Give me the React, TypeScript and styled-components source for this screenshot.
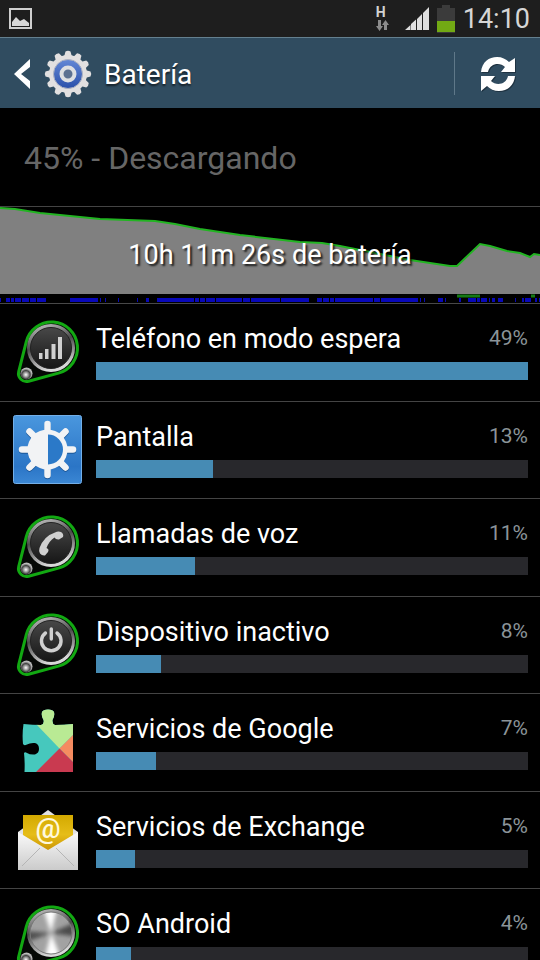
import React, { useId } from "react";
import styled, { createGlobalStyle } from "styled-components";

const GlobalStyle = createGlobalStyle`
  *, *::before, *::after { box-sizing: border-box; }
  body { margin: 0; background: #000; color: #fff; font-family: Roboto, "Noto Sans", sans-serif; overflow: hidden; }
  svg { display: block; flex: none; }
`;

const Screen = styled.main`
  display: flex;
  flex-direction: column;
  height: 100vh;
  overflow: hidden;
  & > * { flex: none; }
`;

const StatusBar = styled.div`
  display: flex;
  align-items: center;
  justify-content: space-between;
  height: 37px;
  padding: 0 10px 0 8px;
  background: #1e1e1e;
`;

const StatusGroup = styled.div`
  display: flex;
  align-items: center;
  gap: 8px;
`;

const Network = styled.div`
  display: flex;
  flex-direction: column;
  gap: 2px;
  width: 21px;
  color: #d2d2d2;
  font-size: 14px;
  line-height: 12px;
  font-weight: 700;
`;

const Clock = styled.time`
  color: #d6d6d6;
  font-size: 27px;
  line-height: 36px;
`;

const Header = styled.header`
  display: flex;
  align-items: center;
  height: 71px;
  padding: 1px 0 0 12px;
  border-top: 1px solid #64808f;
  background: #304c60;
`;

const BackButton = styled.button`
  display: flex;
  align-items: center;
  gap: 12px;
  padding: 0;
  border: 0;
  background: none;
`;

const Title = styled.h1`
  flex: 1;
  margin: 2px 0 0 12px;
  font-size: 28px;
  line-height: 36px;
  font-weight: 400;
  text-shadow: 0 2px 2px rgba(0, 0, 0, 0.6);
`;

const RefreshButton = styled.button`
  display: flex;
  align-items: center;
  justify-content: center;
  width: 86px;
  height: 43px;
  padding: 0;
  border: 0;
  border-left: 1px solid #5f7889;
  background: none;
`;

const Summary = styled.p`
  margin: 0;
  padding: 32px 24px 30px;
  border-bottom: 1px solid #444;
  color: #666;
  font-size: 32px;
  line-height: 36px;
`;

const HistoryButton = styled.button`
  display: grid;
  width: 100%;
  padding: 0;
  border: 0;
  border-bottom: 1px solid #484848;
  background: none;
  color: #fff;
  font: inherit;
  & > * { grid-area: 1 / 1; }
`;

const HistoryLabel = styled.span`
  place-self: center;
  font-size: 27px;
  line-height: 36px;
  text-shadow: 2px 2px 2px rgba(0, 0, 0, 0.8);
`;

const List = styled.ul`
  margin: 0;
  padding: 0;
  list-style: none;
`;

const Row = styled.li`
  display: flex;
  align-items: flex-start;
  gap: 12px;
  height: 98px;
  padding: 12px 12px 0;
  border-bottom: 1px solid #444;
  &:nth-child(even) { height: 97px; }
`;

const Details = styled.div`
  flex: 1;
  min-width: 0;
`;

const Line = styled.div`
  display: flex;
  justify-content: space-between;
  align-items: center;
  height: 46px;
`;

const Name = styled.span`
  font-size: 27px;
  line-height: 36px;
`;

const Percent = styled.span`
  padding-bottom: 2px;
  color: #8b9499;
  font-size: 21px;
  line-height: 36px;
`;

const Track = styled.div`
  height: 18px;
  background: #28282c;
`;

const Fill = styled.div`
  height: 100%;
  background: #468bb4;
`;

const PictureIcon = () => (
  <svg width="25" height="22" viewBox="0 0 25 22" aria-hidden="true">
    <path d="M2 1H23V20H2Z" fill="none" stroke="#cfcfcf" strokeWidth="2" />
    <path d="M4 18V14L8 9L12 13L16 11L21 15V18Z" fill="#d8d8d8" />
  </svg>
);

const DataArrows = () => (
  <svg width="13" height="11" viewBox="0 0 13 11" fill="#8c8c8c" aria-hidden="true">
    <path d="M2 0H5V6H7L3.500 11L0 6H2Z" />
    <path d="M8 10H11V5H13L9.500 0L6 5H8Z" />
  </svg>
);

const SignalIcon = () => (
  <svg width="24" height="24" viewBox="0 0 24 24" fill="#dedede" aria-hidden="true">
    <path d="M0 23L5.500 18V23ZM6 17L11 12.500V23H6ZM12 12L17 7V23H12ZM18 6L24 0V23H18Z" />
  </svg>
);

const BatteryIcon = () => (
  <svg width="18" height="28" viewBox="0 0 18 28" aria-hidden="true">
    <path d="M5 0H13V3H18V28H0V3H5Z" fill="#3b3b3b" />
    <path d="M0 16H18V27H0Z" fill="#72a914" />
  </svg>
);

const BackChevron = () => (
  <svg width="20" height="32" viewBox="0 0 20 32" aria-hidden="true">
    <path d="M18 1V9L9 16L18 23V31L2 16Z" fill="#fff" />
  </svg>
);

const teeth = Array.from({ length: 12 }, (_, i) => i * 30);

const SettingsGear = () => (
  <svg width="48" height="48" viewBox="0 0 48 48" aria-hidden="true">
    <defs>
      <linearGradient id="gearBlue" x1="0" y1="0" x2="0" y2="1">
        <stop offset="0" stopColor="#6488d6" />
        <stop offset="1" stopColor="#2b50aa" />
      </linearGradient>
    </defs>
    <g fill="#e2e0e0">
      {teeth.map((angle) => (
        <path key={angle} d="M20 7L21.500 1.500Q24 0 26.500 1.500L28 7Z" transform={`rotate(${angle} 24 24)`} />
      ))}
      <circle cx="24" cy="24" r="19" />
    </g>
    <circle cx="24" cy="24" r="14.500" fill="url(#gearBlue)" stroke="#b0b4c2" />
    <circle cx="24" cy="24" r="6.500" fill="#5d7191" stroke="#dedfe2" strokeWidth="4" />
  </svg>
);

const RefreshIcon = () => (
  <svg width="38" height="38" viewBox="0 0 38 38" aria-hidden="true">
    <g fill="#14222d" opacity="0.6" transform="translate(1 1)">
      <path d="M2 17C3 7 10 2 18 2C23 2 27 4 30 7L36 3V17H22L26 12C21 7 11 8 9 17Z" />
      <path d="M36 21C35 31 28 36 20 36C15 36 11 34 8 31L2 36V21H16L12 26C17 31 27 30 29 21Z" />
    </g>
    <g fill="#fff">
      <path d="M2 17C3 7 10 2 18 2C23 2 27 4 30 7L36 3V17H22L26 12C21 7 11 8 9 17Z" />
      <path d="M36 21C35 31 28 36 20 36C15 36 11 34 8 31L2 36V21H16L12 26C17 31 27 30 29 21Z" />
    </g>
  </svg>
);

const level =
  "0,1 15,2 40,6 100,12 155,14 175,17 200,22 220,25 240,28 300,35 322,36 340,39 375,46 410,53 450,59 457,59 480,37 490,39 507,44 520,46 530,50 534,47 540,48";

const awake =
  "M0 93H1M6 93H10M11 93H14M15 93H21M22 93H29M30 93H36M37 93H46M70 93H98M100 93H101M105 93H106M118 93H119M137 93H138M146 93H149M157 93H194M195 93H199M200 93H205M206 93H215M216 93H242M243 93H250M251 93H280M281 93H309M317 93H322M323 93H329M330 93H334M335 93H373M374 93H380M381 93H418M420 93H421M424 93H425M438 93H443M445 93H446M459 93H461M468 93H476M477 93H480M481 93H487M489 93H490M492 93H495M498 93H503M515 93H516M522 93H524M525 93H531M535 93H537M539 93H540";

const HistoryChart = () => (
  <svg width="100%" height="96" viewBox="0 0 540 96" preserveAspectRatio="none" aria-hidden="true">
    <polygon points={`0,87 ${level} 540,87`} fill="#808080" />
    <polyline points={level} fill="none" stroke="#22b422" strokeWidth="2" />
    <path d={awake} stroke="#0808b8" strokeWidth="4" />
    <path d="M457 89H480M531 89H535" stroke="#157a15" strokeWidth="3" />
  </svg>
);

type Glyph = "signal" | "phone" | "power" | "blank";

const DiscIcon = ({ glyph }: { glyph: Glyph }) => {
  const id = useId();
  const rim = `${id}rim`;
  const face = `${id}face`;
  const ball = `${id}ball`;
  const soft = `${id}soft`;
  const disc = `${id}disc`;
  return (
    <svg width="72" height="72" viewBox="0 0 72 72" aria-hidden="true">
      <defs>
        <linearGradient id={rim} x1="0" y1="0" x2="0.300" y2="1">
          <stop offset="0" stopColor="#d0d0d0" />
          <stop offset="0.500" stopColor="#4c4c4c" />
          <stop offset="1" stopColor="#d8d8d8" />
        </linearGradient>
        <linearGradient id={face} x1="0" y1="0" x2="0" y2="1">
          <stop offset="0" stopColor="#484848" />
          <stop offset="1" stopColor="#161616" />
        </linearGradient>
        <radialGradient id={ball} cx="0.450" cy="0.600">
          <stop offset="0" stopColor="#fff" />
          <stop offset="0.400" stopColor="#999" />
          <stop offset="0.700" stopColor="#444" />
          <stop offset="1" stopColor="#bbb" />
        </radialGradient>
        <filter id={soft}>
          <feGaussianBlur stdDeviation="2" />
        </filter>
        <clipPath id={disc}>
          <circle cx="39" cy="32" r="21" />
        </clipPath>
      </defs>
      <path
        d="M14.300 25.700A26 26 0 1 1 46.400 57.100L16.600 65.200A8 8 0 0 1 6.700 55.600Z"
        fill="#050805"
        stroke="#12a812"
        strokeWidth="3"
      />
      <circle cx="39" cy="32" r="24" fill={`url(#${rim})`} />
      {glyph === "blank" ? (
        <>
          <g clipPath={`url(#${disc})`}>
            <path d="M15 8H63V56H15Z" fill="#a2a2a2" />
            <g filter={`url(#${soft})`}>
              <path d="M39 32L30 4H46Z" fill="#fff" />
              <path d="M39 32L32 60H50Z" fill="#fff" />
              <path d="M39 32L66 20V36Z" fill="#4c4c4c" />
              <path d="M39 32L12 30V42Z" fill="#505050" />
            </g>
          </g>
          <circle cx="39" cy="32" r="21" fill="none" stroke="#777" />
        </>
      ) : (
        <circle cx="39" cy="32" r="20.500" fill={`url(#${face})`} stroke="#222" />
      )}
      {glyph === "signal" && (
        <path d="M27 37H30.500V43H27ZM33 33H36.500V43H33ZM39.500 28H43.500V43H39.500ZM46 21H50V43H46Z" fill="#d0d0d0" />
      )}
      {glyph === "phone" && (
        <path
          d="M43 21.500Q46 20 49 21Q52 23 51 26L47 28.500Q44 29 42.500 26.500Q37 30 34.500 37Q37.500 38 36 41L33 44.500Q30 45 28 42.500Q26.500 40 27.500 37Q32 25 43 21.500Z"
          fill="#d0d0d0"
        />
      )}
      {glyph === "power" && (
        <g fill="none" stroke="#d0d0d0" strokeWidth="3.400" strokeLinecap="round">
          <path d="M33.500 24A9.800 9.800 0 1 0 45 24" />
          <path d="M39.300 20V30" />
        </g>
      )}
      <circle cx="14.500" cy="57.500" r="6" fill={`url(#${ball})`} />
    </svg>
  );
};

const rays = Array.from({ length: 8 }, (_, i) => i * 45);

const BrightnessIcon = () => (
  <svg width="72" height="72" viewBox="0 0 72 72" aria-hidden="true">
    <defs>
      <linearGradient id="tile" x1="0" y1="0" x2="0" y2="1">
        <stop offset="0" stopColor="#4a97de" />
        <stop offset="0.750" stopColor="#2b75c6" />
        <stop offset="1" stopColor="#3b87d4" />
      </linearGradient>
    </defs>
    <rect x="1.500" y="1.500" width="68" height="68" rx="2" fill="url(#tile)" stroke="#73afe8" />
    <g stroke="#1c5797" strokeWidth="6.500" strokeLinecap="round" transform="translate(0 1)">
      {rays.map((angle) => (
        <path key={angle} d="M35.500 18V10" transform={`rotate(${angle} 35.500 35.500)`} />
      ))}
    </g>
    <g stroke="#f2f3f5" strokeWidth="6.500" strokeLinecap="round">
      {rays.map((angle) => (
        <path key={angle} d="M35.500 18V10" transform={`rotate(${angle} 35.500 35.500)`} />
      ))}
    </g>
    <circle cx="35.500" cy="35.500" r="20" fill="#f2f3f5" />
    <path d="M36 20.500A15 15 0 0 1 36 50.500Z" fill="#2b79c8" />
  </svg>
);

const PuzzleIcon = () => (
  <svg width="72" height="72" viewBox="0 0 72 72" aria-hidden="true">
    <defs>
      <clipPath id="piece">
        <path d="M11.500 18Q21 19 29 19Q32.500 18 31.500 14Q29 10 30 6Q31 3.500 36 3.500Q41 3.500 42 6Q43 10 40.500 14Q40 18 43 19Q52 19 61 18V66H12.500Q13 56 12 47Q13 45.500 15 47Q18 49 23 48.500Q27 47 27 43Q27 38 23 37Q18 36.500 15 38.500Q12 40 11 38Q10 28 11.500 18Z" />
      </clipPath>
    </defs>
    <g clipPath="url(#piece)">
      <path d="M0 0H72V72H0Z" fill="#46c8bd" />
      <path d="M24 0V18L47.500 42.500L61 29V0Z" fill="#b9ea94" />
      <path d="M47.500 42.500L62 28V57Z" fill="#f58b60" />
      <path d="M47.500 42.500L62 57V67H23Z" fill="#c93a50" />
    </g>
  </svg>
);

const AtText = styled.text`
  font-family: Roboto, sans-serif;
  font-size: 28px;
  font-weight: 500;
`;

const MailIcon = () => (
  <svg width="72" height="72" viewBox="0 0 72 72" aria-hidden="true">
    <defs>
      <linearGradient id="letter" x1="0" y1="0" x2="0" y2="1">
        <stop offset="0" stopColor="#d3a900" />
        <stop offset="0.500" stopColor="#e6bd18" />
        <stop offset="1" stopColor="#c58c00" />
      </linearGradient>
      <linearGradient id="envelope" x1="0" y1="0" x2="0" y2="1">
        <stop offset="0" stopColor="#fafafa" />
        <stop offset="1" stopColor="#cbcbcb" />
      </linearGradient>
    </defs>
    <path d="M6 28L36 6L66 28V65H6Z" fill="#e2e2e2" />
    <path d="M11 11H61V50H11Z" fill="url(#letter)" />
    <AtText x="36" y="34" textAnchor="middle" fill="#fff8dc">@</AtText>
    <path d="M6 28L36 46L66 28V66H6Z" fill="url(#envelope)" />
    <path d="M10 62L28 44M62 62L44 44" stroke="#b5b5b5" />
  </svg>
);

type Item = { name: string; percent: number; bar: number; icon: React.ReactNode };

const items: Item[] = [
  { name: "Teléfono en modo espera", percent: 49, bar: 100, icon: <DiscIcon glyph="signal" /> },
  { name: "Pantalla", percent: 13, bar: 27, icon: <BrightnessIcon /> },
  { name: "Llamadas de voz", percent: 11, bar: 23, icon: <DiscIcon glyph="phone" /> },
  { name: "Dispositivo inactivo", percent: 8, bar: 15, icon: <DiscIcon glyph="power" /> },
  { name: "Servicios de Google", percent: 7, bar: 14, icon: <PuzzleIcon /> },
  { name: "Servicios de Exchange", percent: 5, bar: 9, icon: <MailIcon /> },
  { name: "SO Android", percent: 4, bar: 8, icon: <DiscIcon glyph="blank" /> },
];

export default function App() {
  return (
    <>
      <GlobalStyle />
      <Screen>
        <StatusBar>
          <PictureIcon />
          <StatusGroup>
            <Network>
              H
              <DataArrows />
            </Network>
            <SignalIcon />
            <BatteryIcon />
            <Clock>14:10</Clock>
          </StatusGroup>
        </StatusBar>
        <Header>
          <BackButton aria-label="Atrás">
            <BackChevron />
            <SettingsGear />
          </BackButton>
          <Title>Batería</Title>
          <RefreshButton aria-label="Actualizar">
            <RefreshIcon />
          </RefreshButton>
        </Header>
        <Summary>45% - Descargando</Summary>
        <HistoryButton>
          <HistoryChart />
          <HistoryLabel>10h 11m 26s de batería</HistoryLabel>
        </HistoryButton>
        <List>
          {items.map((item) => (
            <Row key={item.name}>
              {item.icon}
              <Details>
                <Line>
                  <Name>{item.name}</Name>
                  <Percent>{item.percent}%</Percent>
                </Line>
                <Track>
                  <Fill style={{ width: `${item.bar}%` }} />
                </Track>
              </Details>
            </Row>
          ))}
        </List>
      </Screen>
    </>
  );
}
